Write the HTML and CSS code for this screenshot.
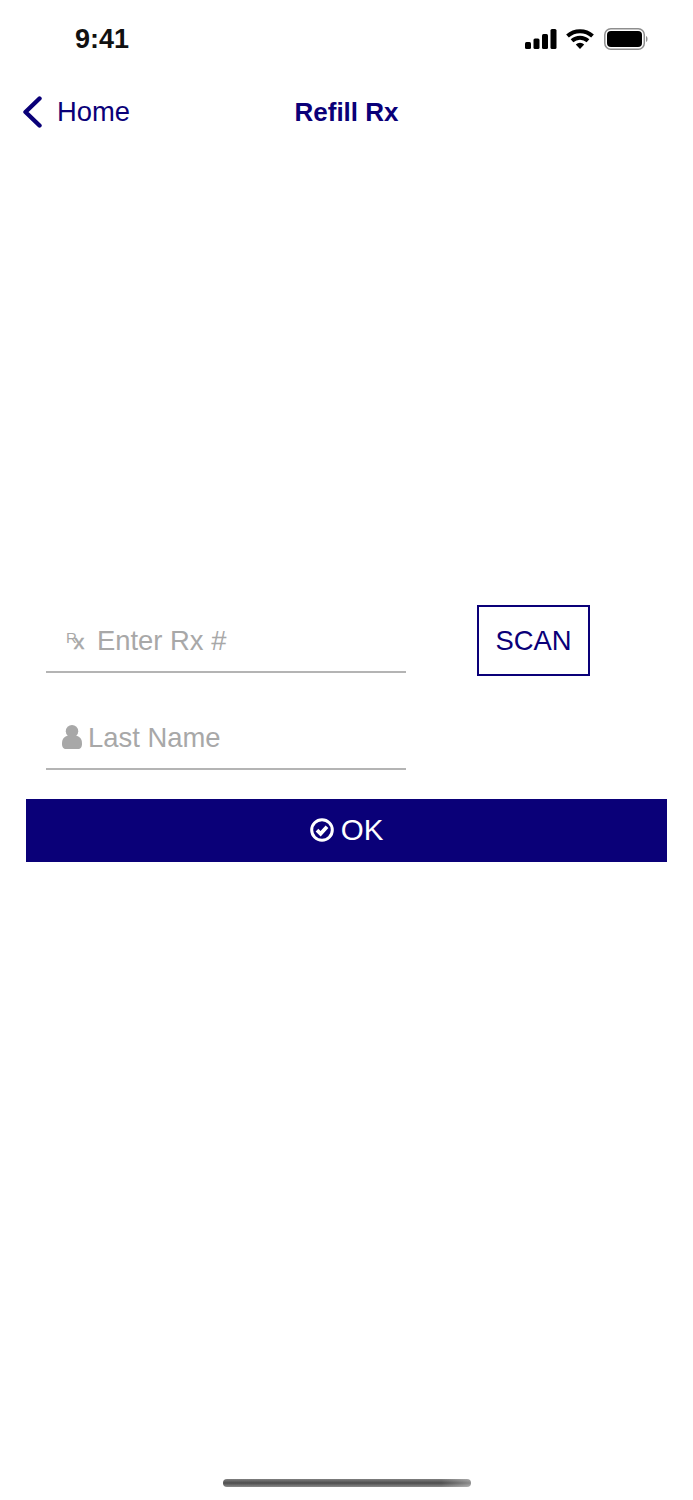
FILE: index.html
```html
<!DOCTYPE html>
<html lang="en">
<head>
<meta charset="UTF-8" />
<meta name="viewport" content="width=device-width, initial-scale=1" />
<title>Refill Rx</title>
<link rel="stylesheet" href="styles.css">
</head>
<body>
<div class="status-bar">
    <span class="time">9:41</span>
    <div class="status-icons">
        <svg class="icon-signal" width="32" height="20" viewBox="0 0 32 20" aria-hidden="true">
            <rect x="0" y="13" width="6" height="7" rx="1.5" />
            <rect x="8.5" y="9.5" width="6" height="10.5" rx="1.5" />
            <rect x="17" y="5" width="6" height="15" rx="1.5" />
            <rect x="25.5" y="0" width="6" height="20" rx="1.5" />
        </svg>
        <svg class="icon-wifi" width="28" height="20" viewBox="0 0 28 20" aria-hidden="true">
            <path d="M1.5 7 A18.5 18.5 0 0 1 26.5 7" />
            <path d="M6 11.8 A12 12 0 0 1 22 11.8" />
            <path class="wifi-dot" d="M9.8 15.4 A6.2 6.2 0 0 1 18.2 15.4 L14 20 Z" />
        </svg>
        <svg class="icon-battery" width="45" height="22" viewBox="0 0 45 22" aria-hidden="true">
            <rect class="battery-case" x="0.8" y="0.8" width="39.5" height="20.4" rx="6" />
            <rect x="3" y="3" width="35" height="16" rx="4" />
            <path class="battery-cap" d="M42 8 C44 8.5 44 13.5 42 14 Z" />
        </svg>
    </div>
</div>

<nav class="nav-bar">
    <a class="back-link" href="#">
        <svg width="20" height="32" viewBox="0 0 20 32" aria-hidden="true">
            <path d="M17.5 2.5 L3.5 16 L17.5 29.5" />
        </svg>
        <span>Home</span>
    </a>
    <h1 class="nav-title">Refill Rx</h1>
</nav>

<main class="refill">
    <form class="refill-form">
        <div class="rx-row">
            <label class="field field-rx">
                <span class="rx-symbol">R<span class="rx-x">x</span></span>
                <input type="text" placeholder="Enter Rx #" />
            </label>
            <button type="button" class="scan-btn">SCAN</button>
        </div>
        <label class="field field-name">
            <svg width="20" height="24" viewBox="0 0 20 24" aria-hidden="true">
                <ellipse cx="10" cy="6.2" rx="6.2" ry="6.2" />
                <path d="M0 18.5 C0 13.5 2.5 11.5 6 10.5 L14 10.5 C17.5 11.5 20 13.5 20 18.5 C20 22.5 18.5 24 16 24 L4 24 C1.5 24 0 22.5 0 18.5 Z" />
            </svg>
            <input type="text" placeholder="Last Name" />
        </label>
        <button type="submit" class="ok-btn">
            <svg width="24" height="24" viewBox="0 0 24 24" aria-hidden="true">
                <circle cx="12" cy="12" r="10.3" />
                <path d="M7 12.2 L10.6 15.8 L17 8.8" />
            </svg>
            <span>OK</span>
        </button>
    </form>
</main>

<div class="home-indicator"></div>
</body>
</html>
```

FILE: styles.css
```css
html,
body {
    height: 100%;
}
body {
    margin: 0;
    min-height: 1500px;
    box-sizing: border-box;
    display: flex;
    flex-direction: column;
    font-family: "Liberation Sans", Arial, sans-serif;
    background-color: #fff;
    color: #0a0078;
}
.status-bar {
    height: 78px;
    box-sizing: border-box;
    padding: 0 44px 0 75px;
    display: flex;
    justify-content: space-between;
    align-items: center;
    color: #000;
}
.time {
    font-size: 27px;
    font-weight: 700;
    color: #111;
}
.status-icons {
    display: flex;
    align-items: center;
    gap: 9px;
}
.icon-signal {
    fill: #000;
}
.icon-wifi {
    fill: none;
    stroke: #000;
    stroke-width: 4;
}
.wifi-dot {
    fill: #000;
    stroke: none;
}
.icon-battery {
    fill: #000;
    margin-left: 1px;
}
.battery-case {
    fill: none;
    stroke: #8e8e8e;
    stroke-width: 1.5;
}
.battery-cap {
    fill: #8e8e8e;
}
.nav-bar {
    height: 68px;
    position: relative;
    display: flex;
    align-items: center;
    justify-content: center;
}
.back-link {
    position: absolute;
    left: 22px;
    top: 18px;
    display: flex;
    align-items: center;
    gap: 15px;
    color: #0a0078;
    font-size: 27.4px;
    text-decoration: none;
}
.back-link svg {
    fill: none;
    stroke: #0a0078;
    stroke-width: 4.4;
    stroke-linecap: round;
    stroke-linejoin: round;
}
.nav-title {
    margin: 0;
    font-size: 26px;
    font-weight: 700;
}
.refill {
    padding: 459px 26px 0;
}
.refill-form {
    display: flex;
    flex-direction: column;
}
.rx-row {
    display: flex;
    align-items: flex-start;
    padding-left: 20px;
    gap: 71px;
}
.field {
    width: 360px;
    height: 67px;
    box-sizing: border-box;
    border-bottom: 2px solid #b4b4b4;
    display: flex;
    align-items: center;
    color: #a8a8a8;
}
.field input {
    flex: 1;
    min-width: 0;
    border: none;
    outline: none;
    padding: 0;
    background: none;
    font-family: inherit;
    font-size: 27.4px;
    color: #555;
}
.field input::placeholder {
    color: #a8a8a8;
    opacity: 1;
}
.field-rx {
    height: 68px;
    padding: 5px 0 0 20px;
}
.rx-symbol {
    width: 31px;
    flex: none;
    font-size: 15px;
    line-height: 1;
    margin-top: -11px;
}
.rx-x {
    font-size: 21px;
    -webkit-text-stroke: 0.5px #a8a8a8;
    position: relative;
    top: 6px;
    margin-left: -3px;
}
.field-name {
    margin: 27px 0 0 20px;
    padding: 4px 0 0 16px;
}
.field-name svg {
    fill: #a8a8a8;
    margin: -2px 6px 0 0;
    flex: none;
}
.scan-btn {
    width: 113px;
    height: 71px;
    box-sizing: border-box;
    background: #fff;
    border: 2px solid #0a0078;
    color: #0a0078;
    font-family: inherit;
    font-size: 27.4px;
    padding: 0;
}
.ok-btn {
    margin-top: 29px;
    height: 63px;
    background-color: #0a0078;
    border: none;
    color: #fff;
    font-family: inherit;
    font-size: 29.5px;
    display: flex;
    align-items: center;
    justify-content: center;
    gap: 7px;
    padding: 0 0 2px;
}
.ok-btn svg {
    fill: none;
    stroke: #fff;
}
.ok-btn svg circle {
    stroke-width: 3;
}
.ok-btn svg path {
    stroke-width: 3.8;
}
.home-indicator {
    margin: auto auto 13px;
    width: 248px;
    height: 8px;
    border-radius: 4px;
    background:
        linear-gradient(to right, transparent 88%, rgba(255, 255, 255, 0.35)),
        linear-gradient(to bottom, #808080, #4e4e4e 50%, #8c8c8c);
}
```
